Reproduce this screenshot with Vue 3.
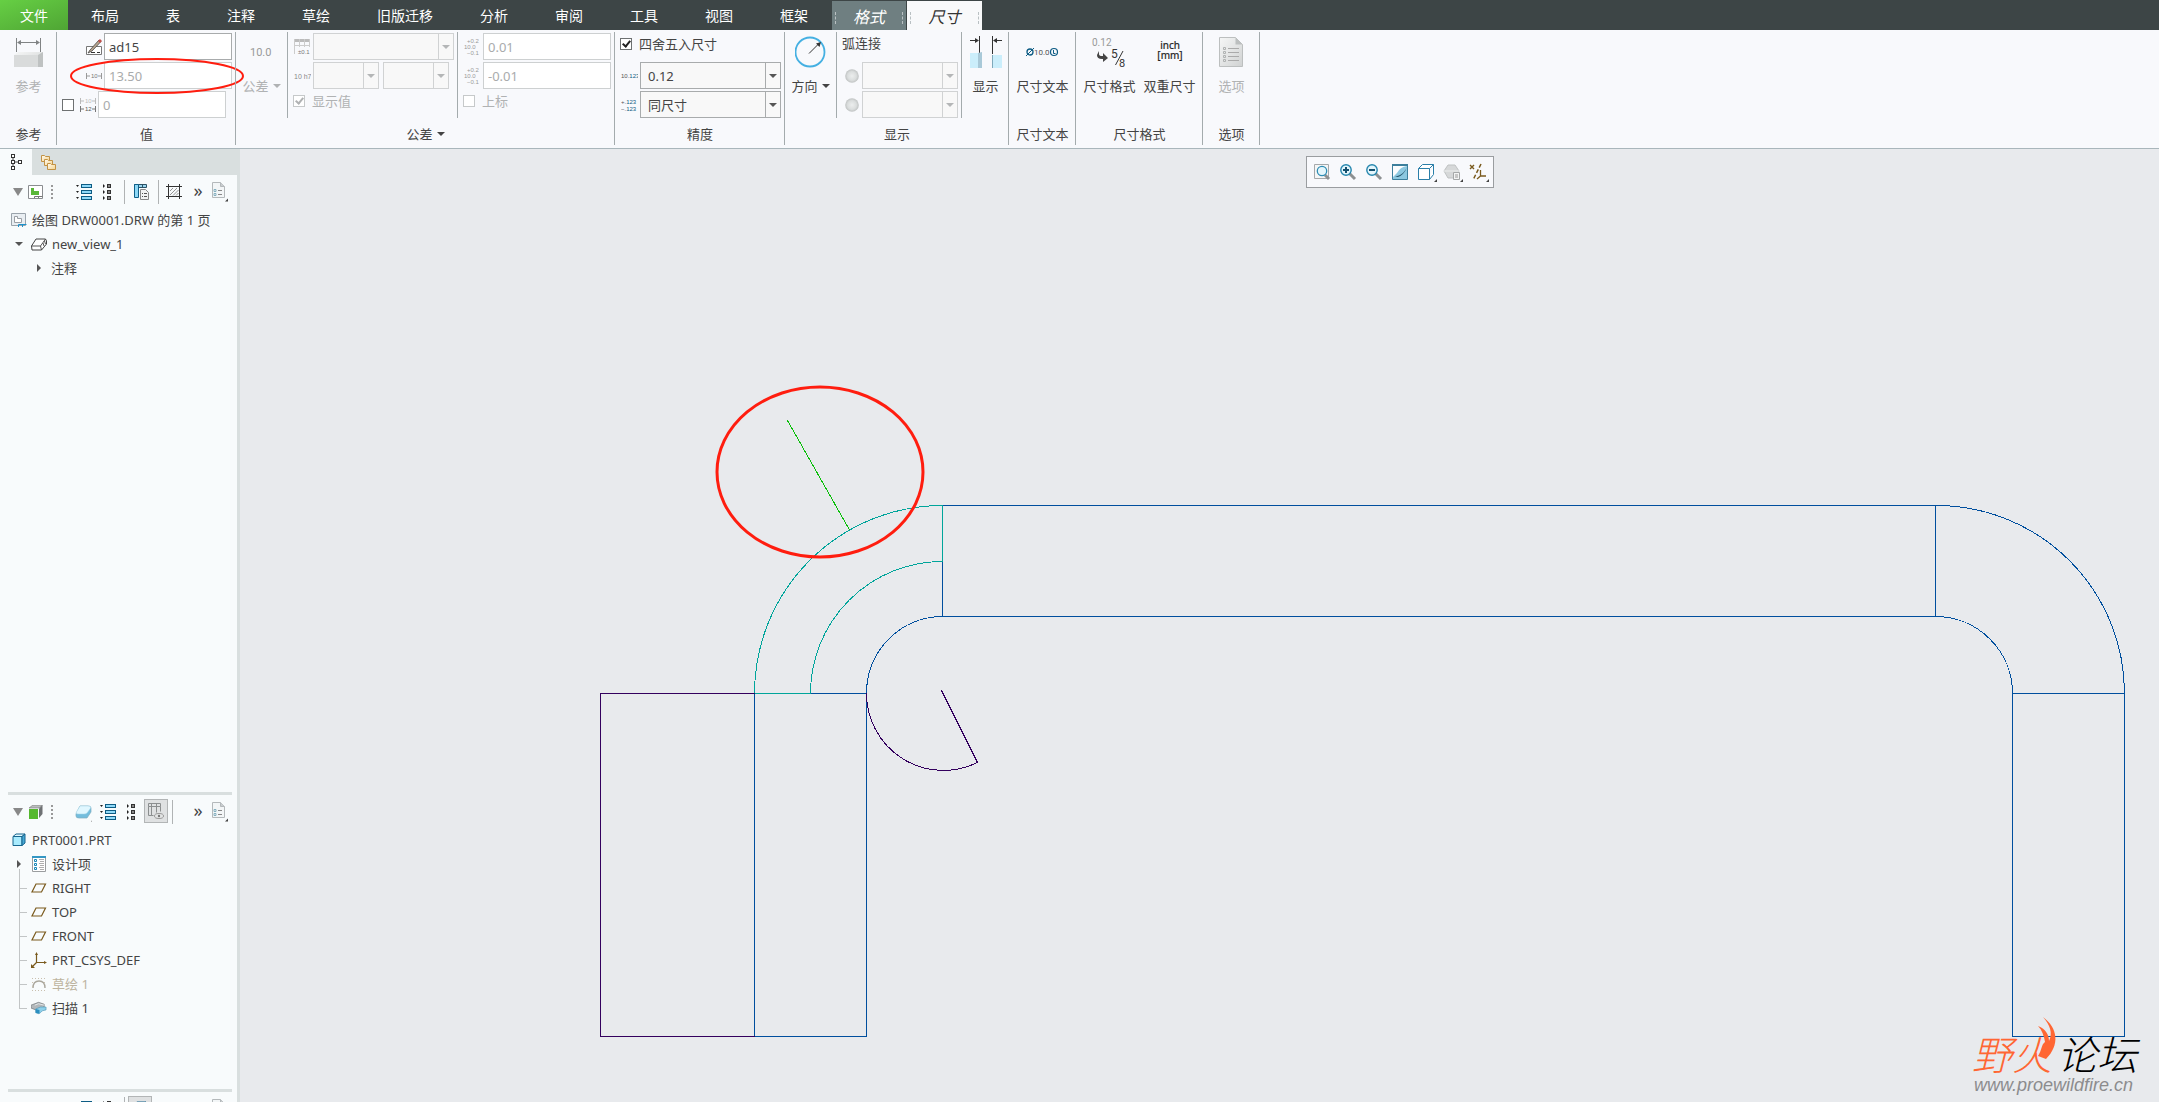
<script setup>
import { ref } from 'vue'

const tabs = ['布局', '表', '注释', '草绘', '旧版迁移', '分析', '审阅', '工具', '视图', '框架']

const dimName = ref('ad15')
const nominal = ref('13.50')
const override = ref('0')
const upper = ref('0.01')
const lower = ref('-0.01')
const rounded = ref(true)

const limits = [
  { label: '上公差', model: upper },
  { label: '下公差', model: lower },
]

const viewTools = [
  { id: 'refit', label: '重新调整', menu: false },
  { id: 'zoomin', label: '放大', menu: false },
  { id: 'zoomout', label: '缩小', menu: false },
  { id: 'repaint', label: '重画', menu: false },
  { id: 'style', label: '显示样式', menu: true },
  { id: 'section', label: '截面', menu: true },
  { id: 'datum', label: '基准显示', menu: true },
]

const features = [
  { icon: 'design', text: '设计项', kind: 'parent' },
  { icon: 'plane', text: 'RIGHT', kind: 'leaf' },
  { icon: 'plane', text: 'TOP', kind: 'leaf' },
  { icon: 'plane', text: 'FRONT', kind: 'leaf' },
  { icon: 'csys', text: 'PRT_CSYS_DEF', kind: 'leaf' },
  { icon: 'sketch', text: '草绘 1', kind: 'leaf hidden' },
  { icon: 'sweep', text: '扫描 1', kind: 'leaf last' },
]
</script>

<template>
  <div class="app">
    <svg class="defs" width="0" height="0" aria-hidden="true">
      <defs>
        <linearGradient id="gBlue" x1="0" y1="0" x2="1" y2="1">
          <stop offset="0" stop-color="#f4fbfe" /><stop offset="1" stop-color="#58b4d8" />
        </linearGradient>
        <linearGradient id="gGrey" x1="0" y1="0" x2="1" y2="1">
          <stop offset="0" stop-color="#f6f7f7" /><stop offset="1" stop-color="#d0d2d2" />
        </linearGradient>
        <radialGradient id="gBall">
          <stop offset="0" stop-color="#eceeee" /><stop offset="0.65" stop-color="#dadddd" /><stop offset="1" stop-color="#bfc2c2" />
        </radialGradient>
        <linearGradient id="gFolder" x1="0" y1="0" x2="1" y2="1">
          <stop offset="0" stop-color="#fffaf0" /><stop offset="1" stop-color="#f5d48f" />
        </linearGradient>
      </defs>
      <symbol id="list" viewBox="0 0 16 16">
        <g fill="#8fd9f8" stroke="#0d5c84" shape-rendering="crispEdges">
          <rect x="5.5" y="0.5" width="10" height="3" /><rect x="5.5" y="6.5" width="10" height="3" /><rect x="5.5" y="12.5" width="10" height="3" />
        </g>
        <path d="M0 1h3L1.500 3zM0 7h3L1.500 9zM0 13h3L1.500 15z" fill="#222" />
      </symbol>
      <symbol id="list2" viewBox="0 0 10 16">
        <g fill="#888" stroke="#333" shape-rendering="crispEdges">
          <rect x="4.500" y="0.500" width="3" height="3" /><rect x="4.500" y="6.500" width="3" height="3" /><rect x="4.500" y="12.500" width="3" height="3" />
        </g>
        <path d="M0 0v4l2-2zM0 6v4l2-2zM0 12v4l2-2z" fill="#222" />
      </symbol>
      <symbol id="doc" viewBox="0 0 17 20">
        <path d="M.5.5h8l4 4v11H.5z" fill="#f3f6f7" stroke="#b4b9bb" />
        <path d="M8.500.500v4h4" fill="#c9ced0" stroke="#b4b9bb" />
        <path d="M2 7.500h2v2H2zM2 11.500h2v2H2z" fill="none" stroke="#6fa3b5" stroke-width=".8" />
        <path d="M6 8.500h4M6 12.500h4" stroke="#888" />
        <path d="M16 16.500v3h-3z" fill="#444" />
      </symbol>
      <symbol id="page" viewBox="0 0 16 14">
        <path d="M.5.5h14v13H.5z" fill="#fff" stroke="#8a8d90" />
        <path d="M3 3h3v3h5v4H3z" fill="#5ab738" />
        <path d="M6.500 13v-1.500h8M10.500 13v-1.500" fill="none" stroke="#777" />
      </symbol>
      <symbol id="drawing" viewBox="0 0 16 14">
        <path d="M.5.5h14v12H.5z" fill="#e9eef2" stroke="#9aa3ab" />
        <path d="M3.500 3.500h3v2h4v4h-7z" fill="#fff" stroke="#9a9fa5" />
        <path d="M7.500 14v-2.500h8M11.500 14v-2.500" fill="none" stroke="#1d93cc" />
      </symbol>
      <symbol id="cube" viewBox="0 0 14 14">
        <path d="M0 4h9v10H0z" fill="#55b82e" />
        <path d="M0 3l4-3h9.500L10 3z" fill="#b9bcbd" stroke="#777" stroke-width=".6" />
        <path d="M10 3.500L13.500 0v9L10 13z" fill="#6e7173" />
      </symbol>
      <symbol id="surface" viewBox="0 0 18 20">
        <path d="M5 4h8q3 0 3 2v4l-4 6H4q-3 0-3-2v-2z" fill="#73bddd" stroke="#80aebf" stroke-width=".7" />
        <path d="M5 4h8q4 0 2 3l-3 4q-1 1-3 1H3q-3 0-1-3z" fill="#e0f7ff" stroke="#a3d2e4" stroke-width=".5" />
        <path d="M17 18.500v1h-1z" fill="#444" />
      </symbol>
      <symbol id="columns" viewBox="0 0 16 16">
        <path d="M.5.500h12v3H.500zM.5 3.500v9h3v-9M3.500 12.500V.5M8.500.5v9M12.500 3.500v5M3.500 12.500h2" fill="none" stroke="#8b8e8f" />
        <ellipse cx="11" cy="13" rx="4.500" ry="2.500" fill="#e3e5e5" stroke="#999" /><circle cx="11" cy="13" r="1.200" fill="#777" />
      </symbol>
      <symbol id="coltable" viewBox="0 0 16 16">
        <path d="M.5.500h12v3H.5z" fill="#9ad6ef" stroke="#2b5266" /><path d="M.5.500h4v13h-4z" fill="#8ed8f6" stroke="#0f6089" />
        <path d="M8.500.500v3" stroke="#2b5266" />
        <path d="M6.500 5.500h5l3 3v7h-8z" fill="#f2f3f3" stroke="#888" />
        <path d="M8 9.500h1m1 0h3M8 12.500h1m1 0h3" stroke="#555" />
      </symbol>
      <symbol id="hatch" viewBox="0 0 17 15">
        <path d="M0 2.500h16M0 12.500h16M2.500 0v15M13.500 0v15" stroke="#333" shape-rendering="crispEdges" />
        <path d="M4 7l3-3M4 11l7-7M7 11.500L12.500 6M10 11.500l2.500-2.500" stroke="#888" stroke-width=".9" />
      </symbol>
      <symbol id="part" viewBox="0 0 14 14">
        <path d="M1 3.500h9v9H1z" fill="#a9ebfd" stroke="#17658e" /><path d="M1 3.500L4 1h9l-3 2.500z" fill="#e2f9ff" stroke="#17658e" /><path d="M10 3.500L13 1v9l-3 2.500z" fill="#47a8d4" stroke="#17658e" />
      </symbol>
      <symbol id="view" viewBox="0 0 16 13">
        <path d="M5 1h9.500L15.500 3v3l-5 6H1L.5 8z" fill="#fff" stroke="#444" /><path d="M.5 8h9l5-7M9.500 8l1 4M12 5l1 3M13.500 3l1 3" fill="none" stroke="#444" stroke-width=".9" />
      </symbol>
      <symbol id="design" viewBox="0 0 14 16">
        <path d="M.5.500h13v15H.5z" fill="#fff" stroke="#9a9d9f" /><path d="M0 1h14" stroke="#3497c4" stroke-width="2" />
        <path d="M2.500 3.500h2v2h-2zM2.500 7.500h2v2h-2zM2.500 11.500h2v2h-2z" fill="#fff" stroke="#1686b8" />
        <path d="M7 3.500h5M8 5.500h4M7 7.500h5M8 9.500h4M7 11.500h5M8 13.500h4" stroke="#999" stroke-width=".8" />
      </symbol>
      <symbol id="plane" viewBox="0 0 16 16"><path d="M5 4h9.500l-4 8H1z" fill="none" stroke="#7a5a1d" stroke-width="1.200" /></symbol>
      <symbol id="csys" viewBox="0 0 16 16">
        <path d="M5.500 2v8.500H14M5.500 10.500L1.500 14.500" fill="none" stroke="#7a5a1d" stroke-width="1.200" />
        <path d="M4 3l1.500-3L7 3zM13 9l3 1.500-3 1.500zM0 12v4h4z" fill="#7a5a1d" />
      </symbol>
      <symbol id="sketch" viewBox="0 0 16 16">
        <path d="M2 12q0-7 6-7t6 7" fill="none" stroke="#aaa79d" stroke-width="1.400" />
        <path d="M1 2.500h14M1 14.500h14M1 6.500h2M1 10.500h1M13 6.500h2" stroke="#c9bfae" stroke-dasharray="1 2" />
      </symbol>
      <symbol id="sweep" viewBox="0 0 17 14">
        <path d="M0 4L8 1l6 2v3L5 9 0 7z" fill="#b2b7ba" stroke="#777c80" stroke-width=".8" /><path d="M4 4l4-1.500L14 4" fill="none" stroke="#e4e7e9" />
        <path d="M5 8l5-2h6v3l-4 1-2 2-2 1-3-1z" fill="#8ed0ea" stroke="#5299b8" stroke-width=".7" /><path d="M5 8l4 1v4l-4-1z" fill="#2b8fc0" />
      </symbol>
      <symbol id="glass" viewBox="0 0 18 18">
        <path d="M10.500 10.500l5.500 5.500" stroke="#8d9092" stroke-width="3" /><circle cx="7" cy="7" r="5.200" fill="#e4f6fc" stroke="#2586ae" stroke-width="1.400" />
      </symbol>
      <symbol id="refit" viewBox="0 0 18 18">
        <path d="M1.500 1.500h14v14h-14z" fill="#f5f6f6" stroke="#a5a8aa" /><path d="M12 12l4 4" stroke="#8d9092" stroke-width="3" /><circle cx="9" cy="8" r="4.700" fill="#e4f6fc" stroke="#2f8db4" stroke-width="1.300" />
      </symbol>
      <symbol id="zoomin" viewBox="0 0 18 18"><use href="#glass" /><path d="M4 7h6M7 4v6" stroke="#14506f" stroke-width="2" /></symbol>
      <symbol id="zoomout" viewBox="0 0 18 18"><use href="#glass" /><path d="M4 7h6" stroke="#14506f" stroke-width="2" /></symbol>
      <symbol id="repaint" viewBox="0 0 18 18">
        <path d="M1.500 1.500h15v15h-15z" fill="#8cc8e0" />
        <path d="M2 2h14v1Q9 4 6 10L2 14z" fill="#fbfdfe" />
        <path d="M16 4q-3 8-9 10H4l5-2q5-3 7-8z" fill="#25566c" />
        <path d="M1.500 16.500v-15h15v15z" fill="none" stroke="#3c7f9c" /><path d="M1 2h16" stroke="#3c7f9c" stroke-width="2" />
      </symbol>
      <symbol id="style" viewBox="0 0 18 18">
        <path d="M1.500 5.500h11v11h-11zM1.500 5.500l4-4h11l-4 4M16.500 1.500v10l-4 5" fill="#fff" stroke="#2a7ea8" />
      </symbol>
      <symbol id="section" viewBox="0 0 18 18">
        <path d="M1 8l4-6h7l4 6-4 7H5z" fill="#d6d8d9" stroke="#bfc2c3" /><path d="M1 8h15" fill="none" stroke="#eceeee" /><path d="M10.500 9.500h6v7h-6z" fill="#f3f4f4" stroke="#a5a8a9" /><path d="M12 12h3m-3 2h3" stroke="#999" />
      </symbol>
      <symbol id="datum" viewBox="0 0 18 18">
        <path d="M1 2l4 4M5 2L1 6" stroke="#7a5a1d" stroke-width="1.400" /><path d="M12 1L4 17" stroke="#7a5a1d" stroke-width="1.500" stroke-dasharray="4 2" />
        <path d="M11.500 7v6H17M11.500 13L8 16" fill="none" stroke="#7a5a1d" stroke-width="1.300" />
      </symbol>
    </svg>

    <nav class="tabs">
      <button class="file">文件</button>
      <button v-for="t in tabs" :key="t" class="tab">{{ t }}</button>
      <button class="ctx">格式</button>
      <button class="ctx active">尺寸</button>
    </nav>

    <header class="ribbon">
      <section class="group narrow">
        <div class="body">
          <button class="big" disabled>
            <svg width="32" height="32" viewBox="0 0 32 32">
              <path d="M3.500 2v14M27.500 2v14M5 6.500h21" stroke="#808384" fill="none" /><path d="M4 6.500l4-2.500v5zM27 6.500l-4-2.500v5z" fill="#808384" />
              <path d="M1 19l4-3h25v15H1z" fill="url(#gGrey)" /><path d="M25 19l5-3v15h-5z" fill="#bfc2c2" /><path d="M1 19h24v12H1z" fill="#d9dbdb" />
            </svg>
            <span>参考</span>
          </button>
        </div>
        <h2>参考</h2>
      </section>

      <section class="group values">
        <div class="body">
          <div class="rows">
            <div class="row inset">
              <svg width="16" height="16" viewBox="0 0 16 16"><path d="M.5 7.500h15v8H.5z" fill="#fff" stroke="#777" /><path d="M5 13.500h4M11 13.500h3" stroke="#333" /><path d="M4 11L13 1l2 1.500L6 12l-4 2z" fill="#b9a58f" stroke="#444" stroke-width=".8" /><path d="M12 2l2-2 2 2-2 2z" fill="#c2504a" /></svg>
              <input v-model="dimName" class="field" aria-label="名称">
            </div>
            <div class="row inset">
              <svg width="16" height="8" viewBox="0 0 16 8"><path d="M.5 1v6M15.500 1v6M1 4h3M12 4h3" stroke="#999" /><text x="5" y="6" font-size="6" fill="#777" font-family="Liberation Sans">10</text></svg>
              <input v-model="nominal" class="field" aria-label="公称值" disabled>
            </div>
            <div class="row">
              <input type="checkbox" class="check" aria-label="覆盖值">
              <svg width="16" height="14" viewBox="0 0 16 14"><path d="M.5 0v6M15.500 0v6M1 3h3M12 3h3" stroke="#bbb" /><path d="M.5 8v6M15.500 8v6M1 11h3M12 11h3" stroke="#777" /><text x="5" y="5" font-size="6" fill="#bbb" font-family="Liberation Sans">10</text><text x="5" y="13" font-size="6" fill="#555" font-family="Liberation Sans">12</text></svg>
              <input v-model="override" class="field" aria-label="覆盖" disabled>
            </div>
          </div>
          <svg class="mark" width="176" height="40" viewBox="0 0 176 40"><ellipse cx="87" cy="20" rx="86" ry="17" fill="none" stroke="#ff1d0f" stroke-width="2" /></svg>
        </div>
        <h2>值</h2>
      </section>

      <section class="group tolerance">
        <div class="body">
          <button class="big split" disabled>
            <svg width="32" height="32" viewBox="0 0 32 32"><text x="4" y="20" font-size="11" fill="#999" font-family="Roboto">10.0</text></svg>
            <span>公差<i class="arrow"></i></span>
          </button>
          <div class="rows ruled">
            <div class="row">
              <svg width="17" height="17" viewBox="0 0 17 17"><path d="M0 1h16v3H0z" fill="#bbb" /><path d="M.5 1v15M5.500 1v8M10.500 1v8M15.500 1v8M0 7.500h16" stroke="#ccc" fill="none" /><text x="4" y="16" font-size="6" fill="#777" font-family="Liberation Sans">±0.1</text></svg>
              <span class="combo wide off"><select aria-label="公差表" disabled><option></option></select></span>
            </div>
            <div class="row">
              <svg width="17" height="10" viewBox="0 0 17 10"><text x="0" y="8" font-size="7" fill="#888" font-family="Liberation Sans">10 h7</text></svg>
              <span class="combo pair off"><select aria-label="公差类型" disabled><option></option></select></span>
              <span class="combo pair off"><select aria-label="公差等级" disabled><option></option></select></span>
            </div>
            <label class="tick off"><input type="checkbox" class="check" checked disabled>显示值</label>
          </div>
          <div class="rows ruled">
            <div v-for="l in limits" :key="l.label" class="row">
              <svg width="17" height="19" viewBox="0 0 17 19" font-size="6" fill="#999" font-family="Liberation Sans">
                <text x="3" y="6">+0.2</text><text x="0" y="12">10.0</text><text x="3" y="18">−0.1</text>
              </svg>
              <input v-model="l.model.value" class="field" :aria-label="l.label" disabled>
            </div>
            <label class="tick off"><input type="checkbox" class="check" disabled>上标</label>
          </div>
        </div>
        <h2>公差<i class="arrow"></i></h2>
      </section>

      <section class="group precision">
        <div class="body">
          <div class="rows">
            <label class="tick top"><input v-model="rounded" type="checkbox" class="check">四舍五入尺寸</label>
            <div class="row">
              <svg width="17" height="8" viewBox="0 0 17 8"><text x="0" y="6" font-size="6" fill="#555" font-family="Liberation Sans">10.<tspan fill="#0d5c84">123</tspan></text></svg>
              <span class="combo wide"><select aria-label="小数位数"><option>0.12</option></select></span>
            </div>
            <div class="row">
              <svg width="17" height="14" viewBox="0 0 17 14"><text x="0" y="6" font-size="6" fill="#555" font-family="Liberation Sans">+.<tspan fill="#0d5c84">123</tspan></text><text x="0" y="13" font-size="6" fill="#555" font-family="Liberation Sans">−.<tspan fill="#0d5c84">123</tspan></text></svg>
              <span class="combo wide"><select aria-label="公差小数位数"><option>同尺寸</option></select></span>
            </div>
          </div>
        </div>
        <h2>精度</h2>
      </section>

      <section class="group display">
        <div class="body">
          <button class="big split">
            <svg width="32" height="32" viewBox="0 0 32 32"><circle cx="15" cy="16" r="14.500" fill="none" stroke="#45b0e2" stroke-width="1.800" /><path d="M14 17.500L24 7.500" stroke="#333" /><path d="M26 6l-5 1.500 3.500 3.500z" fill="#333" /></svg>
            <span>方向<i class="arrow"></i></span>
          </button>
          <div class="rows ruled arcs">
            <div class="caption">弧连接</div>
            <div class="row"><svg width="14" height="14" viewBox="0 0 14 14"><circle cx="7" cy="7" r="6.800" fill="url(#gBall)" /></svg><span class="combo mid off"><select aria-label="弧连接 1" disabled><option></option></select></span></div>
            <div class="row"><svg width="14" height="14" viewBox="0 0 14 14"><circle cx="7" cy="7" r="6.800" fill="url(#gBall)" /></svg><span class="combo mid off"><select aria-label="弧连接 2" disabled><option></option></select></span></div>
          </div>
          <div class="cell ruled">
            <button class="big">
              <svg width="32" height="32" viewBox="0 0 32 32"><path d="M9.500 0v18M22.500 0v18M0 4.500h8M24 4.500h8" stroke="#333" /><path d="M9 4.500L5 2v5zM23 4.500L27 2v5z" fill="#333" /><path d="M0 17h12v15H0z" fill="#cbeefb" /><path d="M8 17l4-1v16H8z" fill="#a9c9d8" /><path d="M23 19h9v13h-9z" fill="#cbeefb" /><path d="M22.500 19v13" stroke="#7fa9bb" /></svg>
              <span>显示</span>
            </button>
          </div>
        </div>
        <h2>显示</h2>
      </section>

      <section class="group dimtext">
        <div class="body">
          <button class="big">
            <svg width="34" height="32" viewBox="0 0 34 32"><circle cx="5" cy="16" r="3" fill="none" stroke="#0d5c84" stroke-width="1.300" /><path d="M1 20l8-8" stroke="#0d5c84" /><text x="9" y="19" font-size="8" fill="#555" font-family="Roboto">10.0</text><circle cx="29" cy="16" r="3.500" fill="none" stroke="#0d5c84" stroke-width="1.200" /><path d="M28.500 14v3.500h2" fill="none" stroke="#0d5c84" /></svg>
            <span>尺寸文本</span>
          </button>
        </div>
        <h2>尺寸文本</h2>
      </section>

      <section class="group format">
        <div class="body">
          <button class="big">
            <svg width="36" height="32" viewBox="0 0 36 32"><text x="1" y="10" font-size="10" fill="#999" font-family="Roboto">0.12</text><path d="M8 15v3q0 2 3 2h1v-3l5 5-5 4v-3h-1q-5 0-5-4z" fill="#444" /><text x="20" y="22" font-size="12" fill="#333" font-family="Roboto">5</text><path d="M24.500 29L32 15" stroke="#333" /><text x="28" y="31" font-size="11" fill="#333" font-family="Roboto">8</text></svg>
            <span>尺寸格式</span>
          </button>
          <button class="big">
            <svg width="32" height="32" viewBox="0 0 32 32"><text x="16" y="13" font-size="10" text-anchor="middle" fill="#222" stroke="#222" stroke-width=".2" font-family="Noto Sans">inch</text><text x="16" y="23" font-size="10" text-anchor="middle" fill="#222" stroke="#222" stroke-width=".2" font-family="Noto Sans">[mm]</text></svg>
            <span>双重尺寸</span>
          </button>
        </div>
        <h2>尺寸格式</h2>
      </section>

      <section class="group narrow">
        <div class="body">
          <button class="big" disabled>
            <svg width="24" height="32" viewBox="0 0 24 32"><path d="M.5 1.500h16l7 7v22H.5z" fill="url(#gGrey)" stroke="#bcbfbf" /><path d="M16.500 1.500v7h7z" fill="#bcbfbf" /><path d="M9 12.500h11M9 16.500h11M9 20.500h11M9 24.500h11" stroke="#aaa" /><path d="M4.500 11.500h2v2h-2zM4.500 15.500h2v2h-2zM4.500 19.500h2v2h-2zM4.500 23.500h2v2h-2z" fill="none" stroke="#b0b3b3" /></svg>
            <span>选项</span>
          </button>
        </div>
        <h2>选项</h2>
      </section>
    </header>

    <div class="work">
      <aside class="side">
        <div class="sidetabs">
          <button class="on" aria-label="模型树"><svg width="11" height="16" viewBox="0 0 11 16"><path d="M2 2v12M2 8h7" stroke="#444" /><path d="M.5.500h3v3h-3zM.5 6.500h3v3h-3zM.5 12.500h3v3h-3zM7.500 6.500h3v3h-3z" fill="#fff" stroke="#333" shape-rendering="crispEdges" /></svg></button>
          <button aria-label="文件夹"><svg width="17" height="17" viewBox="0 0 17 17"><g fill="url(#gFolder)" stroke="#c29245"><path d="M1.500 1.500h3l1 1h4v5h-8z" /><path d="M4.500 5.500h3l1 1h4v5h-8z" /><path d="M7.500 9.500h3l1 1h4v5h-8z" /></g></svg></button>
        </div>

        <section class="panel grow">
          <div class="bar">
            <span class="c20"><i class="tri"></i></span>
            <span class="c16"><svg width="16" height="14"><use href="#page" /></svg></span>
            <span class="c16"><i class="grip"></i></span>
            <span class="c12"></span>
            <button class="c24" aria-label="展开"><svg width="16" height="16"><use href="#list" /></svg></button>
            <button class="c24" aria-label="收起"><svg width="10" height="16"><use href="#list2" /></svg></button>
            <span class="c8"><i class="rule"></i></span>
            <button class="c28" aria-label="列"><svg width="16" height="16"><use href="#coltable" /></svg></button>
            <span class="c4"><i class="rule"></i></span>
            <button class="c28" aria-label="剖面线"><svg width="17" height="15"><use href="#hatch" /></svg></button>
            <span class="fill"></span>
            <button class="c20 more">»</button>
            <button class="c24" aria-label="设置"><svg width="17" height="20"><use href="#doc" /></svg></button>
          </div>
          <ul class="tree">
            <li class="root"><svg width="16" height="14"><use href="#drawing" /></svg>绘图 DRW0001.DRW 的第 1 页</li>
            <li class="level1"><span class="twist"><i class="down"></i></span><svg width="16" height="13"><use href="#view" /></svg>new_view_1</li>
            <li class="level2"><span class="twist"><i class="right"></i></span>注释</li>
          </ul>
        </section>

        <section class="panel model">
          <div class="bar">
            <span class="c20"><i class="tri"></i></span>
            <span class="c16"><svg width="14" height="14"><use href="#cube" /></svg></span>
            <span class="c16"><i class="grip"></i></span>
            <span class="c12"></span>
            <button class="c24" aria-label="显示"><svg width="18" height="20"><use href="#surface" /></svg></button>
            <button class="c24" aria-label="展开"><svg width="16" height="16"><use href="#list" /></svg></button>
            <button class="c24" aria-label="收起"><svg width="10" height="16"><use href="#list2" /></svg></button>
            <button class="c24 pressed" aria-label="列显示"><svg width="16" height="16"><use href="#columns" /></svg></button>
            <span class="c8"><i class="rule"></i></span>
            <span class="fill"></span>
            <button class="c20 more">»</button>
            <button class="c24" aria-label="设置"><svg width="17" height="20"><use href="#doc" /></svg></button>
          </div>
          <ul class="tree">
            <li class="root"><svg width="16" height="14"><use href="#part" /></svg>PRT0001.PRT</li>
            <li v-for="f in features" :key="f.text" class="level1" :class="f.kind">
              <span class="twist line"><i v-if="f.kind === 'parent'" class="right"></i></span>
              <svg width="16" height="16"><use :href="'#' + f.icon" /></svg>{{ f.text }}
            </li>
          </ul>
        </section>

        <section class="panel peek">
          <div class="bar">
            <span class="c20"></span>
            <span class="c16"></span>
            <span class="c16"><i class="grip"></i></span>
            <span class="c12"></span>
            <button class="c24" aria-label="展开"><svg width="16" height="16"><use href="#list" /></svg></button>
            <button class="c24" aria-label="收起"><svg width="10" height="16"><use href="#list2" /></svg></button>
            <span class="c8"><i class="rule"></i></span>
            <button class="c24 pressed" aria-label="实体"><svg width="14" height="14"><use href="#part" /></svg></button>
            <span class="fill"></span>
            <button class="c28" aria-label="零件"><svg width="14" height="14"><use href="#part" /></svg></button>
            <button class="c24" aria-label="设置"><svg width="17" height="20"><use href="#doc" /></svg></button>
          </div>
        </section>
      </aside>

      <main class="canvas">
        <svg class="sheet" viewBox="240 149 1919 953" preserveAspectRatio="xMinYMin meet">
          <g fill="none" stroke-width="1" shape-rendering="crispEdges">
            <g stroke="#004f9e">
              <path d="M754.500 693.500V1036.500H866.500V693.500H810.500" />
              <path d="M866.500 693.500A76 77 0 0 1 942.500 616.500" />
              <path d="M942.500 505.500H1936.500A188 188 0 0 1 2124.500 693.500V1036.500H2012.500V693.500A77 77 0 0 0 1935.500 616.500H942.500V561.500" />
              <path d="M1935.500 505.500V616.500M2012.500 693.500H2124.500" />
            </g>
            <g stroke="#00a59b">
              <path d="M810.500 693.500H754.500A188 188 0 0 1 942.500 505.500V561.500A132 132 0 0 0 810.500 693.500" />
            </g>
            <g stroke="#33005e">
              <path d="M754.500 693.500H600.500V1036.500H754.500" />
              <path d="M866.500 693.500A77 77 0 0 0 977.500 762.500L941.500 690.500" />
            </g>
            <path d="M787.500 420.500L849.500 530" stroke="#0abf0a" />
          </g>
          <ellipse cx="820" cy="472" rx="103" ry="85" fill="none" stroke="#ff1d0f" stroke-width="3" />
          <text class="brand" x="1972" y="1070" fill="#ff6633">野火</text>
          <text class="brand" x="2057" y="1070" fill="#000">论坛</text>
          <path d="M2043 1017C2058 1028 2060 1045 2046 1059L2038 1056C2042 1050 2041 1045 2045 1042C2044 1036 2042 1030 2038 1026C2046 1029 2049 1035 2049 1041C2053 1033 2050 1025 2043 1017Z" fill="#ff6633" />
          <text class="url" x="1974" y="1091" fill="#8c8c8e">www.proewildfire.cn</text>
        </svg>
        <div class="viewbar">
          <button v-for="v in viewTools" :key="v.id" :aria-label="v.label" :class="{ menu: v.menu }"><svg width="18" height="18"><use :href="'#' + v.id" /></svg></button>
        </div>
      </main>
    </div>
  </div>
</template>

<style>
body { margin: 0; }
</style>

<style scoped>
.app { display: flex; flex-direction: column; height: 100vh; overflow: hidden; background: #f8f9fc; color: #444; font: 13px/18px "Noto Sans", "Noto Sans CJK SC", sans-serif; }
.defs { position: absolute; }
button { border: 0; padding: 0; margin: 0; background: none; color: inherit; font: inherit; }
svg { display: block; flex: none; }

.tabs { display: flex; height: 30px; flex: none; background: #3d4546; color: #fff; }
.tabs button { font-size: 14px; white-space: nowrap; padding: 2px 24px 0 23px; }
.tabs .file { width: 68px; padding: 2px 0 0; background: linear-gradient(160deg, #66cf44, #4fa534); }
.tabs .ctx { position: relative; width: 75px; padding: 2px 0 0; border-top: 1px solid #3d4546; border-right: 1px solid #3d4546; background: #6f7f81; font-size: 16px; font-style: italic; }
.tabs .ctx.active { background: #f8f9fa; color: #333; border-right: 0; }
.ctx::before, .ctx::after { content: ""; position: absolute; top: 11px; height: 12px; border-left: 1px dashed #b9c0c2; }
.ctx::before { left: 3px; }
.ctx::after { right: 3px; }

.ribbon { display: flex; flex: none; height: 118px; border-bottom: 1px solid #a9b6bb; }
.group { position: relative; display: flex; flex-direction: column; box-sizing: border-box; flex: none; }
.group::after { content: ""; position: absolute; right: 0; top: 2px; bottom: 3px; border-right: 1px solid #a4abad; }
.group h2 { display: flex; justify-content: center; align-items: center; margin: 0; height: 30px; padding-top: 2px; font-size: 13px; font-weight: normal; }
.body { position: relative; display: flex; height: 88px; }
.narrow { width: 57px; }
.values { width: 179px; }
.tolerance { width: 379px; }
.precision { width: 170px; }
.display { width: 224px; }
.dimtext { width: 67px; }
.format { width: 127px; }
.narrow .body, .dimtext .body, .format .body { justify-content: center; gap: 8px; }

.big { display: flex; flex-direction: column; align-items: center; padding-top: 6px; gap: 9px; height: 88px; white-space: nowrap; }
.big span { display: flex; align-items: center; }
.big:disabled { color: #b0b2b3; }
.big.split { width: 51px; }
.arrow { margin-left: 4px; border: 4px solid transparent; border-top-color: currentColor; border-bottom: 0; }

.rows { display: flex; flex-direction: column; gap: 2px; padding: 3px 3px 0 5px; }
.values .rows { flex: 1; }
.row { display: flex; align-items: center; height: 27px; gap: 2px; }
.row.inset { padding-left: 24px; }
.values .check { margin-right: 4px; }
.ruled { border-left: 1px solid #a4abad; margin-top: 2px; padding-top: 1px; }
.tolerance .ruled .row { padding-left: 1px; }

.field { box-sizing: border-box; width: 128px; height: 27px; margin: 0; padding: 0 4px; border: 1px solid #a8abac; border-radius: 0; background: #fff; color: #444; font: inherit; outline: 0; }
.field:disabled { border-color: #cdd0d1; color: #a9abac; }
.check { appearance: none; position: relative; flex: none; box-sizing: border-box; width: 12px; height: 12px; margin: 0; border: 1px solid #6e7172; background: #fff; }
.check:checked::after { content: ""; position: absolute; left: 3px; top: 0; width: 3px; height: 6px; border: solid #222; border-width: 0 2px 2px 0; transform: rotate(40deg); }
.check:disabled { border-color: #c6c9ca; }
.check:disabled::after { border-color: #b0b2b3; }
.tick { display: flex; align-items: center; gap: 7px; height: 20px; white-space: nowrap; }
.tick.top { height: 27px; box-sizing: border-box; padding-bottom: 6px; }
.tick.off { color: #b0b2b3; }

.combo { position: relative; display: block; height: 27px; }
.combo select { appearance: none; box-sizing: border-box; width: 100%; height: 27px; margin: 0; padding: 0 20px 0 7px; border: 1px solid #a8abac; border-radius: 0; background: #f8f8f8; color: #444; font: inherit; opacity: 1; outline: 0; }
.combo::before { content: ""; position: absolute; top: 1px; bottom: 1px; right: 15px; border-left: 1px solid #a8abac; pointer-events: none; }
.combo::after { content: ""; position: absolute; top: 12px; right: 4px; border: 4px solid transparent; border-top-color: #555; border-bottom: 0; pointer-events: none; }
.combo.off select, .combo.off::before { border-color: #d0d2d3; }
.combo.off::after { border-top-color: #b4b6b7; }
.wide { width: 141px; }
.pair { width: 66px; margin-right: 2px; }
.mid { width: 96px; }
.precision .row { padding-left: 1px; }
.arcs .row { padding-left: 3px; gap: 3px; }
.caption { height: 27px; line-height: 20px; }
.cell { flex: 1; display: flex; justify-content: center; padding-top: 0; }
.cell .big { padding-top: 4px; }
.mark { position: absolute; left: 13px; top: 26px; pointer-events: none; }

.work { display: flex; flex: 1; min-height: 0; }
.side { display: flex; flex-direction: column; flex: none; box-sizing: border-box; width: 240px; border-right: 3px solid #d9dfdf; background: #f8fbfc; }
.sidetabs { display: flex; flex: none; height: 26px; background: #d9dfdf; }
.sidetabs button { display: flex; align-items: center; justify-content: center; width: 32px; }
.sidetabs .on { background: #f8fbfc; }
.panel { position: relative; flex: none; }
.grow { flex: 1; }
.model { height: 297px; }
.peek { height: 13px; overflow: hidden; }
.model::before, .peek::before { content: ""; display: block; height: 3px; margin: 0 5px 0 8px; background: #d9dfdf; }
.bar { display: flex; height: 33px; padding: 0 5px 0 8px; }
.bar > * { display: flex; align-items: center; justify-content: center; }
.c4 { width: 4px; } .c8 { width: 8px; } .c12 { width: 12px; } .c16 { width: 16px; } .c20 { width: 20px; } .c24 { width: 24px; } .c28 { width: 28px; }
.fill { flex: 1; }
.tri { border: 5px solid transparent; border-top: 8px solid #888; border-bottom: 0; }
.grip { height: 14px; border-left: 2px dotted #999; }
.rule { height: 24px; border-left: 1px solid #b0b3b4; }
.more { font-size: 18px; line-height: 18px; padding-bottom: 3px; }
.pressed { box-sizing: border-box; height: 24px; margin-top: 4px; border: 1px solid #b2b5b6; background: #dfe1e2; }

.tree { list-style: none; margin: 0; padding: 0; }
.tree li { display: flex; align-items: center; height: 24px; gap: 4px; white-space: nowrap; }
.root, .level1 { padding-left: 11px; }
.level2 { padding-left: 31px; }
.tree li > svg { margin-right: 1px; }
.twist { position: relative; display: flex; align-items: center; justify-content: center; width: 16px; height: 24px; }
.down { border: 4px solid transparent; border-top-color: #555; border-bottom: 0; }
.right { border: 4px solid transparent; border-left-color: #555; border-right: 0; }
.line::before { content: ""; position: absolute; left: 8px; top: 0; bottom: 0; border-left: 1px solid #c2c5c6; }
.leaf .line::after { content: ""; position: absolute; left: 8px; top: 12px; width: 8px; border-top: 1px solid #c2c5c6; }
.last .line::before { bottom: 11px; }
.parent .line::before { top: 17px; }
.hidden { color: #bdb49f; }

.canvas { position: relative; flex: 1; min-width: 0; background: #e8eaed; overflow: hidden; }
.sheet { width: 100%; height: auto; }
.brand { font: italic 300 40px/1 "Noto Sans CJK SC", sans-serif; }
.url { font: italic 18px "Liberation Sans", sans-serif; }
.viewbar { position: absolute; left: 1066px; top: 7px; display: flex; box-sizing: border-box; height: 32px; padding: 0 2px; border: 1px solid #9a9da0; background: #f8f9fc; }
.viewbar button { position: relative; display: flex; align-items: center; justify-content: center; width: 26px; }
.menu::after { content: ""; position: absolute; right: 2px; bottom: 5px; border: solid transparent; border-width: 3px 0 0 3px; border-bottom: 3px solid #444; border-top: 0; }
</style>
